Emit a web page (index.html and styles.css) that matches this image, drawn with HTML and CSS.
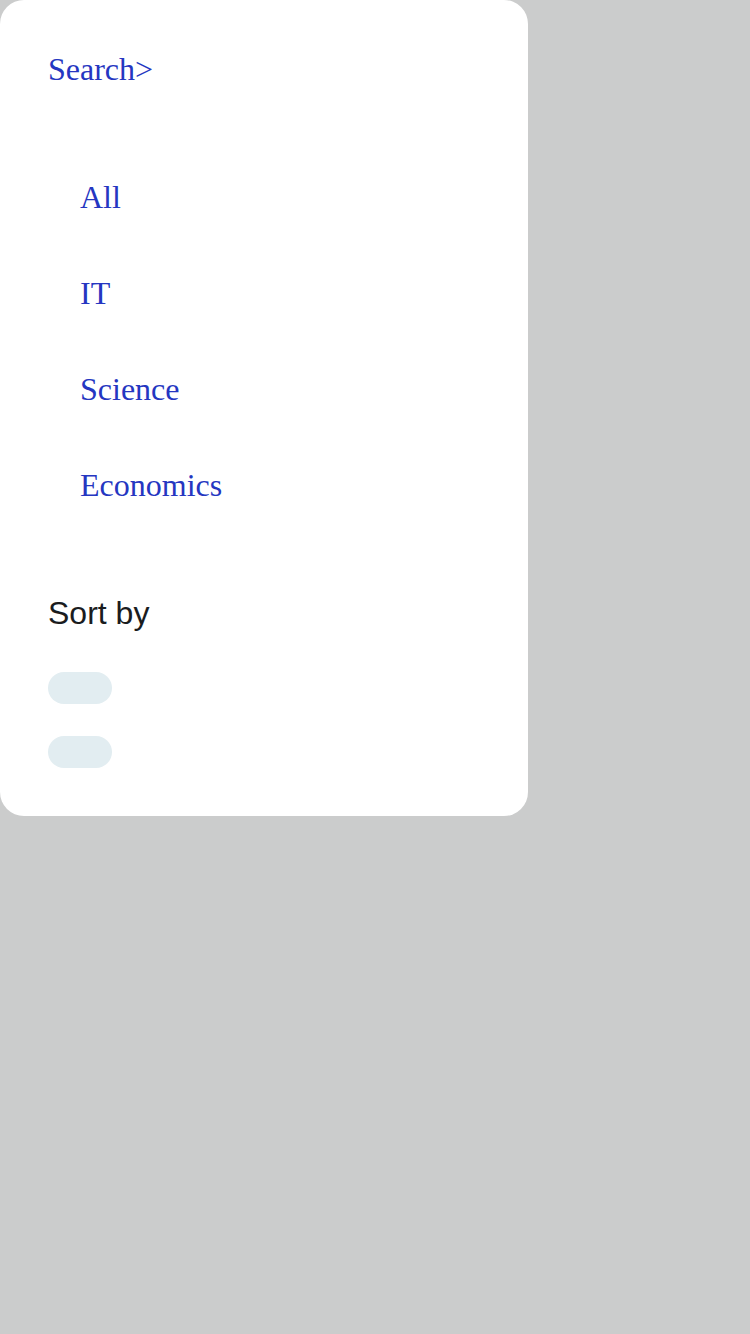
FILE: index.html
```html
<!DOCTYPE html>
<html>
<head>
<meta charset="utf-8">
<link rel="stylesheet" href="styles.css">
</head>
<body>
<div class="panel">
  <a class="search">Search&gt;</a>
  <ul class="cats">
    <li>All</li>
    <li>IT</li>
    <li>Science</li>
    <li>Economics</li>
  </ul>
  <div class="sort-title">Sort by</div>
  <div class="pills">
    <span class="pill"></span>
    <span class="pill"></span>
  </div>
</div>
</body>
</html>
```
FILE: styles.css
```css
html, body {
  margin: 0;
  padding: 0;
  background: #cbcccc;
  height: 100%;
}
.panel {
  width: 528px;
  box-sizing: border-box;
  background: #ffffff;
  border-radius: 24px;
  padding: 49px 48px 48px 48px;
  display: flex;
  flex-direction: column;
}
.search {
  font-family: "Liberation Serif", serif;
  font-size: 32px;
  line-height: 40px;
  color: #2536c1;
}
.cats {
  list-style: none;
  margin: 88px 0 0 0;
  padding: 0 0 0 32px;
  display: flex;
  flex-direction: column;
  gap: 56px;
}
.cats li {
  font-family: "Liberation Serif", serif;
  font-size: 32px;
  line-height: 40px;
  color: #2536c1;
}
.sort-title {
  margin-top: 88px;
  font-family: "Liberation Sans", sans-serif;
  font-size: 32px;
  line-height: 40px;
  color: #1a1c1e;
}
.pills {
  margin-top: 39px;
  display: flex;
  flex-direction: column;
  gap: 32px;
}
.pill {
  display: block;
  width: 64px;
  height: 32px;
  border-radius: 16px;
  background: #e2edf1;
}
```
